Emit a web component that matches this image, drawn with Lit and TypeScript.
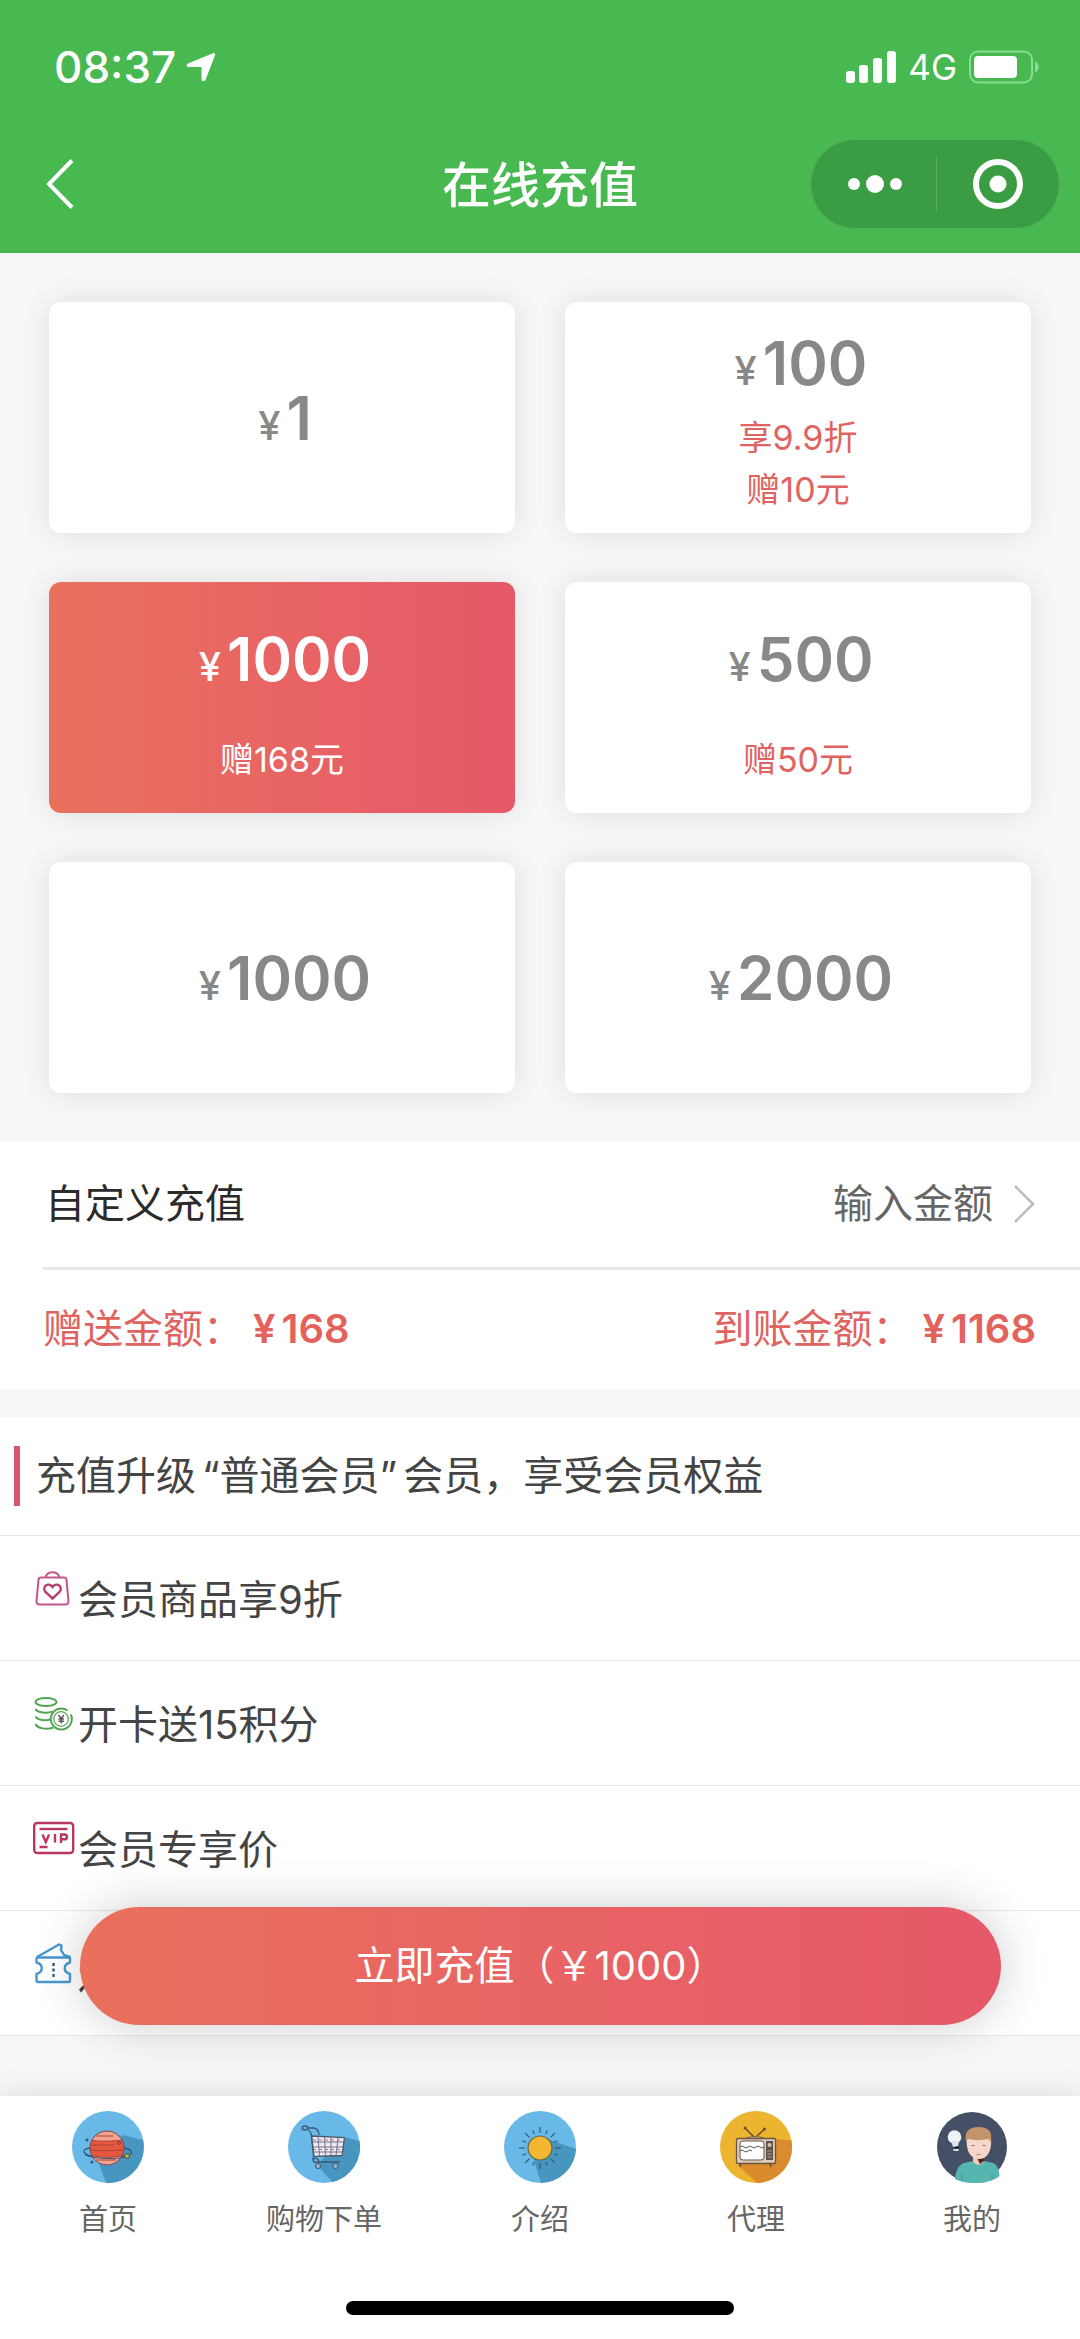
import { LitElement, html, css, svg } from "lit";
import { customElement, state } from "lit/decorators.js";
import { classMap } from "lit/directives/class-map.js";

interface Plan {
  amount: number;
  bonus: number;
  notes: string[];
}

const PLANS: Plan[] = [
  { amount: 1, bonus: 0, notes: [] },
  { amount: 100, bonus: 10, notes: ["享9.9折", "赠10元"] },
  { amount: 1000, bonus: 168, notes: ["赠168元"] },
  { amount: 500, bonus: 50, notes: ["赠50元"] },
  { amount: 1000, bonus: 0, notes: [] },
  { amount: 2000, bonus: 0, notes: [] },
];

const bagIcon = svg`<svg class="perk-icon" viewBox="0 0 44 48" fill="none" stroke="#c2568a" stroke-width="2">
  <path d="M14 13v-1a7 6 0 0 1 13 0v1"/>
  <path d="M9 13.500h23a2.500 2.500 0 0 1 2.500 2.300l2 21.400a3 3 0 0 1-3 3.300H7.500a3 3 0 0 1-3-3.300l2-21.400a2.500 2.500 0 0 1 2.500-2.300z"/>
  <path stroke="#b5426f" stroke-width="2.400" d="M20.500 34.500l-7-6.500c-4-5 2.500-10.500 7-5 4.500-5.500 11 0 7 5z"/>
</svg>`;

const coinsIcon = svg`<svg class="perk-icon" viewBox="0 0 44 48" fill="none" stroke="#52a550" stroke-width="2">
  <ellipse cx="14" cy="13" rx="10.500" ry="4"/>
  <path d="M3.500 20c2 3.800 12 4.800 17 2.400"/>
  <path d="M3.500 27.500c2 3.600 10 4.600 15 3"/>
  <path d="M3.500 35c2 4.500 11 6 18 3.500"/>
  <path d="M35.500 21.500a10.500 10.500 0 1 0 3.300 4"/>
  <circle cx="29" cy="30" r="7.300" stroke-width="1.200"/>
  <path stroke="#555" stroke-width="1.400" d="M26.500 26l2.700 3.500 2.700-3.500M29.200 29.500v5M26.500 30h5.400M26.500 32.200h5.400"/>
</svg>`;

const vipIcon = svg`<svg class="perk-icon" viewBox="0 0 44 48" fill="none" stroke="#b8375f" stroke-width="2.400">
  <rect x="2.200" y="9" width="39" height="30" rx="3"/>
  <path d="M7.500 15h28"/>
  <path stroke-width="2.400" d="M10.500 20.500l3.300 7.500 3.300-7.500M23 20v8.500M29 29v-8.500h3.500a2.300 2.300 0 0 1 0 4.800H29M7.500 33h8"/>
</svg>`;

const ticketIcon = svg`<svg class="perk-icon" viewBox="0 0 44 48" fill="none" stroke="#4698cf" stroke-width="2.400" stroke-linejoin="round">
  <path d="M5 18L27 5.500l2.500 1-.5 4.500 3 5 2.500.800 3.500 1.200"/>
  <path d="M5 18.500h33v5c-7 2-7 9.500 0 11.500v6.500c0 .800-.5 1.500-1.500 1.500H6c-.8 0-1.500-.5-1.500-1.500V35c7-2 7-9.500 0-11.500v-4z"/>
  <path stroke="#2f5f86" d="M21.500 24v3M21.500 29.500v3M21.500 35v3"/>
</svg>`;

const PERKS = [
  { icon: bagIcon, text: "会员商品享9折" },
  { icon: coinsIcon, text: "开卡送15积分" },
  { icon: vipIcon, text: "会员专享价" },
  { icon: ticketIcon, text: "送" },
];

const planetIcon = svg`<svg class="tab-icon" viewBox="0 0 72 72">
  <defs><clipPath id="planet"><circle cx="35" cy="37" r="17"/></clipPath></defs>
  <circle cx="36" cy="36" r="36" fill="#68b9e8"/>
  <path fill="#4796c0" d="M50 24l21 5a36 36 0 0 1-37 43L26 50z"/>
  <path d="M18 37c-9 1-8 7 4 8.500 11 2 29 1.500 36-2 4-3-1-6-6-6.500" fill="none" stroke="#31577d" stroke-width="1.300"/>
  <g clip-path="url(#planet)">
    <rect x="17" y="19" width="36" height="36" fill="#f3a28f"/>
    <path fill="#e6573f" d="M17 29c10 2 26 1 36 0v15c-12 3-26 3-36 0z"/>
    <path stroke="#a5463b" fill="none" d="M24 25h17M18 29c10 2 24 1 34 0M18 34h24M18 39c10 1 22 1 34 0M18 44c10 3 24 3 34 0M24 49h20"/>
  </g>
  <circle cx="35" cy="37" r="17" fill="none" stroke="#74454a" stroke-width="1"/>
  <path d="M13 44c9 4 34 5 43 1" fill="none" stroke="#31577d" stroke-width="1"/>
  <circle cx="55" cy="45" r="2.500" fill="#b6ae44" stroke="#3d5a4c"/>
  <circle cx="15" cy="29" r="1.600" fill="#31577d"/><circle cx="20" cy="51" r="1.600" fill="#31577d"/>
  <circle cx="47" cy="32" r="1.500" fill="none" stroke="#8d3b35"/>
</svg>`;

const cartIcon = svg`<svg class="tab-icon" viewBox="0 0 72 72">
  <circle cx="36" cy="36" r="36" fill="#68b9e8"/>
  <path fill="#4796c0" d="M56 26l15.500 4a36 36 0 0 1-27 41L29 54z"/>
  <path fill="#eceaf0" stroke="#4d5a70" stroke-width="1.300" d="M23.500 25l33 1.500-2.500 18-28 1z"/>
  <path stroke="#77708a" stroke-width="1" d="M24 31h31.500M25 36h30M25 41h29M30 26l1.500 19M36.500 26l1 19M43 26v19M50 26.500L48 45"/>
  <path stroke="#c0707a" stroke-width="1" stroke-dasharray="3 3" d="M25 29h30M25 38.500h29"/>
  <path fill="none" stroke="#3b5878" stroke-width="1.300" d="M19 17h7c4 1 5 3 5 7M20 19c3 1 3 3 3.500 6l2 20.500M25 50v-4M25 51h27M25 50c1-4 5-4 6 1"/>
  <ellipse cx="17" cy="17" rx="2.800" ry="2" fill="#68b9e8" stroke="#3b5878" stroke-width="1.500"/>
  <circle cx="30" cy="55" r="2.600" fill="#9ab2c4" stroke="#3b5878"/><circle cx="47.500" cy="55" r="2.600" fill="#9ab2c4" stroke="#3b5878"/>
</svg>`;

const rays = Array.from({ length: 16 }, (_, i) => i * 22.5);
const sunIcon = svg`<svg class="tab-icon" viewBox="0 0 72 72">
  <circle cx="36" cy="36" r="36" fill="#68b9e8"/>
  <path fill="#4796c0" d="M46 29l26 9a36 36 0 0 1-35 34l-8-26z"/>
  ${rays.map((a, i) => svg`<path transform="rotate(${a} 36 37)" stroke="#2f5570" stroke-width="1.100" d=${i % 2 ? "M36 22v-4" : "M36 22v-6"}/>`)}
  <circle cx="36" cy="37" r="12" fill="#f2b630" stroke="#5a6a50" stroke-width="1.200"/>
</svg>`;

const tvIcon = svg`<svg class="tab-icon" viewBox="0 0 72 72">
  <circle cx="36" cy="36" r="36" fill="#edb42f"/>
  <path fill="#d98b2d" d="M55 28l16.500 1.500A36 36 0 0 1 37 72L18 54z"/>
  <path stroke="#6a4a2c" stroke-width="1.500" fill="none" d="M25 17l9 9M44.500 18L36 26M21 52l-1 4M50 52l1 4"/>
  <circle cx="25" cy="17" r="1.500" fill="#6a4a2c"/><circle cx="44.500" cy="18" r="1.500" fill="#6a4a2c"/>
  <path fill="#e0c9ae" stroke="#7a5a3e" d="M25 28c1-3 19-3 20 0z"/>
  <rect x="16.500" y="27.500" width="39" height="25" rx="1" fill="#dccbb8" stroke="#6b5444" stroke-width="1.300"/>
  <rect x="20" y="30" width="24" height="19" rx="3" fill="#fff" stroke="#6b5444"/>
  <path fill="none" stroke="#555" stroke-width="1" d="M20 36q2-2 4 0t4 0 4 0 4 0 4 0 4 0M20 40q2-2 4 0t4 0 4 0"/>
  <rect x="46" y="30" width="7" height="19" fill="#5d544b"/>
  <circle cx="49.500" cy="34" r="2" fill="#d6c6a8"/><path stroke="#b9a98c" d="M47.500 40h4M47.500 43h4M47.500 46h4"/>
</svg>`;

const personIcon = svg`<svg class="tab-icon" viewBox="0 0 72 72">
  <defs><clipPath id="face"><circle cx="36" cy="36" r="35"/></clipPath></defs>
  <circle cx="36" cy="36" r="35" fill="#454f66"/>
  <path fill="#56b5ae" d="M19 68c1-10 4-14 9-16l9-2h11l9 2c5 2 6 8 6.500 13-10 9-33 9-44.500 3z"/>
  <path fill="#f3c9b8" d="M37 44h11v6c-2 5-9 5-11 0z"/>
  <path fill="#5a2626" d="M41 47l7-1v4l-4 3z"/>
  <path stroke="#3c8f8c" fill="none" d="M26 63v6M56 63v5"/>
  <path fill="#f6d8cb" d="M31 26h24c1 11-2 22-12 22S29.500 37 31 26z"/>
  <path fill="#c2946c" d="M30 31c-2-10 3-15 12-15 11 0 15 5 12.500 15l-2-3c-7 1.500-14 1.500-20.500 0z"/>
  <path stroke="#96625a" stroke-width="1.200" fill="none" d="M35.500 34.500h3M46.500 34.500h3"/>
  <path stroke="#c9867c" stroke-width="1.200" fill="none" d="M40.500 43.500h4"/>
  <circle cx="18.500" cy="26" r="6.800" fill="#eef4f4"/>
  <path fill="#dce6e8" d="M15 30h8l-1 6h-5z"/><path fill="#1d2028" d="M17 36l6-1v2l-3 1z"/><path fill="#dce6e8" d="M17.500 38h5v2h-5z"/>
</svg>`;

const TABS = [
  { icon: planetIcon, text: "首页", href: "#home" },
  { icon: cartIcon, text: "购物下单", href: "#shop" },
  { icon: sunIcon, text: "介绍", href: "#about" },
  { icon: tvIcon, text: "代理", href: "#agent" },
  { icon: personIcon, text: "我的", href: "#me" },
];

@customElement("app-root")
export class AppRoot extends LitElement {
  @state() private selected = 2;

  static styles = css`
    :host {
      display: flex;
      flex-direction: column;
      min-height: 100vh;
      background: #f7f7f7;
      color: #444;
      font: 400 40px/52px Inter, "Noto Sans CJK SC", sans-serif;
      --accent: #df6461;
      --hot: linear-gradient(90deg, #e9705d, #e86265 60%, #e55869);
    }
    * { box-sizing: border-box; }
    button {
      margin: 0;
      padding: 0;
      border: 0;
      background: none;
      color: inherit;
      font: inherit;
      cursor: pointer;
    }
    svg { display: block; flex: none; }
    h1, h2, p, ul { margin: 0; padding: 0; font: inherit; list-style: none; }

    .top { background: #48b850; color: #fff; padding-bottom: 24px; }
    .status {
      display: flex;
      align-items: center;
      justify-content: space-between;
      height: 139px;
      padding: 0 41px 6px 54px;
    }
    .clock { display: flex; align-items: center; gap: 10px; font-size: 44px; font-weight: 500; }
    .signals { display: flex; align-items: center; gap: 12px; font-size: 35px; }
    .nav {
      display: grid;
      grid-template-columns: 1fr auto 1fr;
      align-items: center;
      height: 90px;
      padding: 0 20px;
    }
    .back { justify-self: start; padding-left: 20px; }
    .title { padding-top: 4px; font-size: 49px; font-weight: 500; line-height: 64px; }
    .capsule {
      justify-self: end;
      display: flex;
      align-items: center;
      width: 250px;
      height: 90px;
      padding-left: 3px;
      border: 1px solid #55ad5c;
      border-radius: 45px;
      background: #3b9d43;
    }
    .capsule button { flex: 1; display: flex; justify-content: center; }
    .split { width: 1px; height: 54px; background: #5cb062; }

    .plans {
      display: grid;
      grid-template-columns: 1fr 1fr;
      grid-auto-rows: 231px;
      gap: 49px 50px;
      padding: 49px;
    }
    .plan {
      display: flex;
      flex-direction: column;
      align-items: center;
      justify-content: center;
      gap: 26px;
      padding-top: 8px;
      border-radius: 12px;
      background: #fff;
      color: #888;
      box-shadow: 0 0 30px rgba(0, 0, 0, 0.1);
    }
    .plan.double { gap: 0; padding-top: 2px; }
    .price {
      display: flex;
      align-items: baseline;
      gap: 6px;
      padding-left: 6px;
      line-height: 82px;
      font-size: 60px;
      font-weight: 600;
    }
    .yen { font-size: 40px; font-weight: 500; }
    .notes { display: block; color: var(--accent); font-size: 34px; }
    .note { display: block; }
    .plan.on { background: var(--hot); color: #fff; }
    .plan.on .notes { color: #fff; }

    .panel { background: #fff; margin-bottom: 28px; }
    .custom {
      display: flex;
      align-items: center;
      width: 100%;
      height: 125px;
      padding: 0 45px 2px;
      color: #2b2b2b;
    }
    .hint { margin-left: auto; margin-right: 20px; color: #666; }
    .totals {
      display: flex;
      align-items: center;
      justify-content: space-between;
      height: 122px;
      margin-left: 43px;
      padding: 0 44px 2px 0;
      border-top: 3px solid #e8e8e8;
      color: var(--accent);
    }
    .sum { font-weight: 600; color: #e4625c; margin-left: 10px; }
    .sum .mark { margin-right: 6px; }

    .perks { background: #fff; }
    .perks-title {
      display: flex;
      align-items: center;
      gap: 16px;
      height: 119px;
      padding-left: 14px;
      border-bottom: 1px solid #e6e6e6;
    }
    .perks-title::before { content: ""; width: 6px; height: 60px; background: #d9566f; }
    .level { margin: 0 6px; }
    .perk {
      display: flex;
      align-items: center;
      gap: 2px;
      height: 125px;
      padding: 4px 32px 0;
      border-bottom: 1px solid #e6e6e6;
    }
    .perk-icon { width: 44px; height: 48px; align-self: flex-start; margin-top: 24px; }

    .dock {
      position: sticky;
      bottom: 0;
      margin-top: auto;
      background: #fff;
      box-shadow: 0 0 30px rgba(0, 0, 0, 0.12);
    }
    .pay {
      position: absolute;
      left: 80px;
      right: 79px;
      bottom: calc(100% + 71px);
      height: 118px;
      border-radius: 59px;
      background: var(--hot);
      color: #fff;
      box-shadow: 0 0 50px rgba(0, 0, 0, 0.2);
    }
    .tabs { display: flex; padding-top: 15px; }
    .tab {
      flex: 1;
      display: flex;
      flex-direction: column;
      align-items: center;
      gap: 16px;
      color: #666;
      font-size: 29px;
      line-height: 42px;
      text-decoration: none;
    }
    .tab-icon { width: 72px; height: 72px; }
    .home-bar { width: 36%; height: 14px; margin: 60px auto 24px; border-radius: 7px; background: #000; }
  `;

  render() {
    const plan = PLANS[this.selected];
    return html`
      <header class="top">
        <div class="status">
          <div class="clock">
            <span>08:37</span>
            <svg width="30" height="30" viewBox="0 0 30 30" fill="#fff"><path d="M27 1.200c1.500-.7 2.700.3 2 2L19.500 28c-.8 1.700-4 1.500-4-.5V15H2.500c-2.200 0-2.500-2.700-.5-3.600z"/></svg>
          </div>
          <div class="signals">
            <svg width="50" height="32" viewBox="0 0 50 32" fill="#fff">
              <rect y="20" width="9" height="12" rx="3"/><rect x="13" y="14" width="9" height="18" rx="3"/>
              <rect x="27" y="7" width="9" height="25" rx="3"/><rect x="41" width="9" height="32" rx="3"/>
            </svg>
            <span>4G</span>
            <svg width="70" height="34" viewBox="0 0 70 34">
              <rect x="1" y="1.500" width="62" height="31" rx="8" fill="none" stroke="#86dc90" stroke-width="2"/>
              <rect x="5" y="6" width="43" height="22" rx="4" fill="#fff"/>
              <path d="M66 11.500c5 2 5 9 0 11z" fill="#86dc90"/>
            </svg>
          </div>
        </div>
        <div class="nav">
          <button class="back" aria-label="返回">
            <svg width="40" height="52" viewBox="0 0 40 52" fill="none" stroke="#fff" stroke-width="4"><path d="M32 2.500L9 26l23 23.500"/></svg>
          </button>
          <h1 class="title">在线充值</h1>
          <div class="capsule">
            <button aria-label="更多">
              <svg width="56" height="20" viewBox="0 0 56 20" fill="#fff"><circle cx="7" cy="10" r="6"/><circle cx="28" cy="10" r="9"/><circle cx="49" cy="10" r="6"/></svg>
            </button>
            <span class="split"></span>
            <button aria-label="关闭">
              <svg width="50" height="50" viewBox="0 0 50 50" fill="none" stroke="#fff" stroke-width="6"><circle cx="25" cy="25" r="22"/><circle cx="25" cy="25" r="8.500" fill="#fff" stroke="none"/></svg>
            </button>
          </div>
        </div>
      </header>

      <main>
        <section class="plans">
          ${PLANS.map(
            (p, i) => html`<button
              class=${classMap({ plan: true, double: p.notes.length === 2, on: i === this.selected })}
              aria-pressed=${i === this.selected ? "true" : "false"}
              @click=${() => (this.selected = i)}
            >
              <span class="price"><span class="yen">¥</span><span>${p.amount}</span></span>
              ${p.notes.length
                ? html`<span class="notes">${p.notes.map((n) => html`<span class="note">${n}</span>`)}</span>`
                : null}
            </button>`
          )}
        </section>

        <section class="panel">
          <button class="custom">
            <span>自定义充值</span>
            <span class="hint">输入金额</span>
            <svg width="22" height="40" viewBox="0 0 22 40" fill="none" stroke="#bbb" stroke-width="2.500"><path d="M2 2l18 18L2 38"/></svg>
          </button>
          <div class="totals">
            <p>赠送金额：<span class="sum"><span class="mark">¥</span>${plan.bonus}</span></p>
            <p>到账金额：<span class="sum"><span class="mark">¥</span>${plan.amount + plan.bonus}</span></p>
          </div>
        </section>

        <section class="perks">
          <h2 class="perks-title"><span>充值升级<span class="level">“普通会员”</span>会员，享受会员权益</span></h2>
          <ul>
            ${PERKS.map((p) => html`<li class="perk">${p.icon}<span>${p.text}</span></li>`)}
          </ul>
        </section>
      </main>

      <footer class="dock">
        <button class="pay">立即充值（￥${plan.amount}）</button>
        <nav class="tabs">
          ${TABS.map((t) => html`<a class="tab" href=${t.href}>${t.icon}<span>${t.text}</span></a>`)}
        </nav>
        <div class="home-bar"></div>
      </footer>
    `;
  }
}
